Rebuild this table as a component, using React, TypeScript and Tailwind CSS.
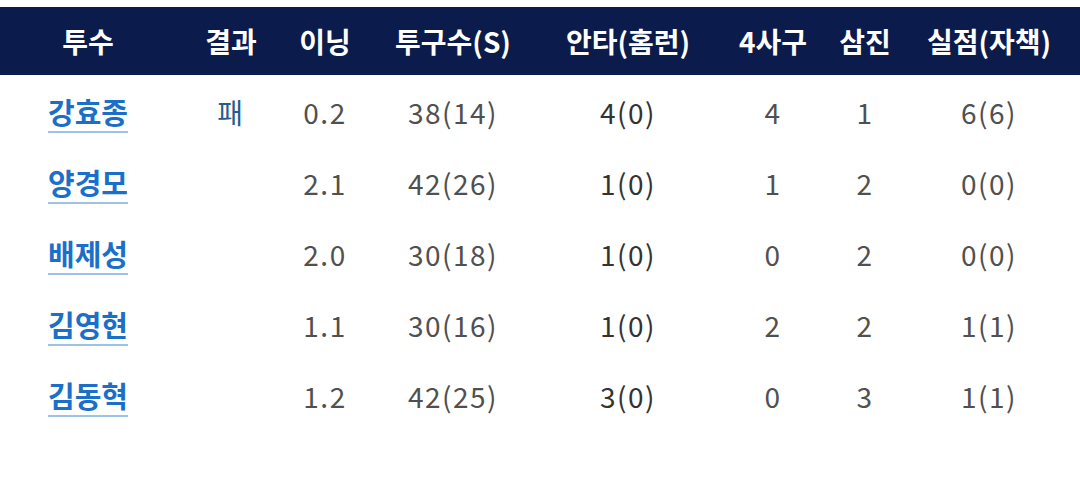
import React from "react";

const cols = [
  "w-[176px]",
  "w-[110px]",
  "w-[78px]",
  "w-[178px]",
  "w-[172px]",
  "w-[118px]",
  "w-[66px]",
  "w-[182px]",
];

const headers = ["투수", "결과", "이닝", "투구수(S)", "안타(홈런)", "4사구", "삼진", "실점(자책)"];

const rows = [
  { name: "강효종", result: "패", ip: "0.2", np: "38(14)", h: "4(0)", bb: "4", so: "1", r: "6(6)" },
  { name: "양경모", result: "", ip: "2.1", np: "42(26)", h: "1(0)", bb: "1", so: "2", r: "0(0)" },
  { name: "배제성", result: "", ip: "2.0", np: "30(18)", h: "1(0)", bb: "0", so: "2", r: "0(0)" },
  { name: "김영현", result: "", ip: "1.1", np: "30(16)", h: "1(0)", bb: "2", so: "2", r: "1(1)" },
  { name: "김동혁", result: "", ip: "1.2", np: "42(25)", h: "3(0)", bb: "0", so: "3", r: "1(1)" },
];

export default function App() {
  return (
    <div className="w-[1080px] h-[484px] bg-white pt-[7px] font-['Noto_Sans_CJK_KR','Noto_Sans',sans-serif]">
      {/* Header */}
      <div className="flex h-[68px] items-center bg-[#0b1c4c] text-white text-[28px] font-bold">
        {headers.map((h, i) => (
          <div key={h} className={`${cols[i]} text-center`}>
            {h}
          </div>
        ))}
      </div>

      {/* Rows */}
      <div className="pt-[1px]">
        {rows.map((r) => (
          <div key={r.name} className="flex h-[71px] items-center text-[28px] tracking-[1.5px] text-[#505050]">
            <div className={`${cols[0]} text-center tracking-normal`}>
              <span className="text-[29px] font-bold text-[#1b6fc8] underline decoration-[#9cc2e6] decoration-2 underline-offset-[7px]">
                {r.name}
              </span>
            </div>
            <div className={`${cols[1]} text-center text-[#245c90]`}>{r.result}</div>
            <div className={`${cols[2]} text-center`}>{r.ip}</div>
            <div className={`${cols[3]} text-center`}>{r.np}</div>
            <div className={`${cols[4]} text-center text-[#333333]`}>{r.h}</div>
            <div className={`${cols[5]} text-center`}>{r.bb}</div>
            <div className={`${cols[6]} text-center`}>{r.so}</div>
            <div className={`${cols[7]} text-center`}>{r.r}</div>
          </div>
        ))}
      </div>
    </div>
  );
}
